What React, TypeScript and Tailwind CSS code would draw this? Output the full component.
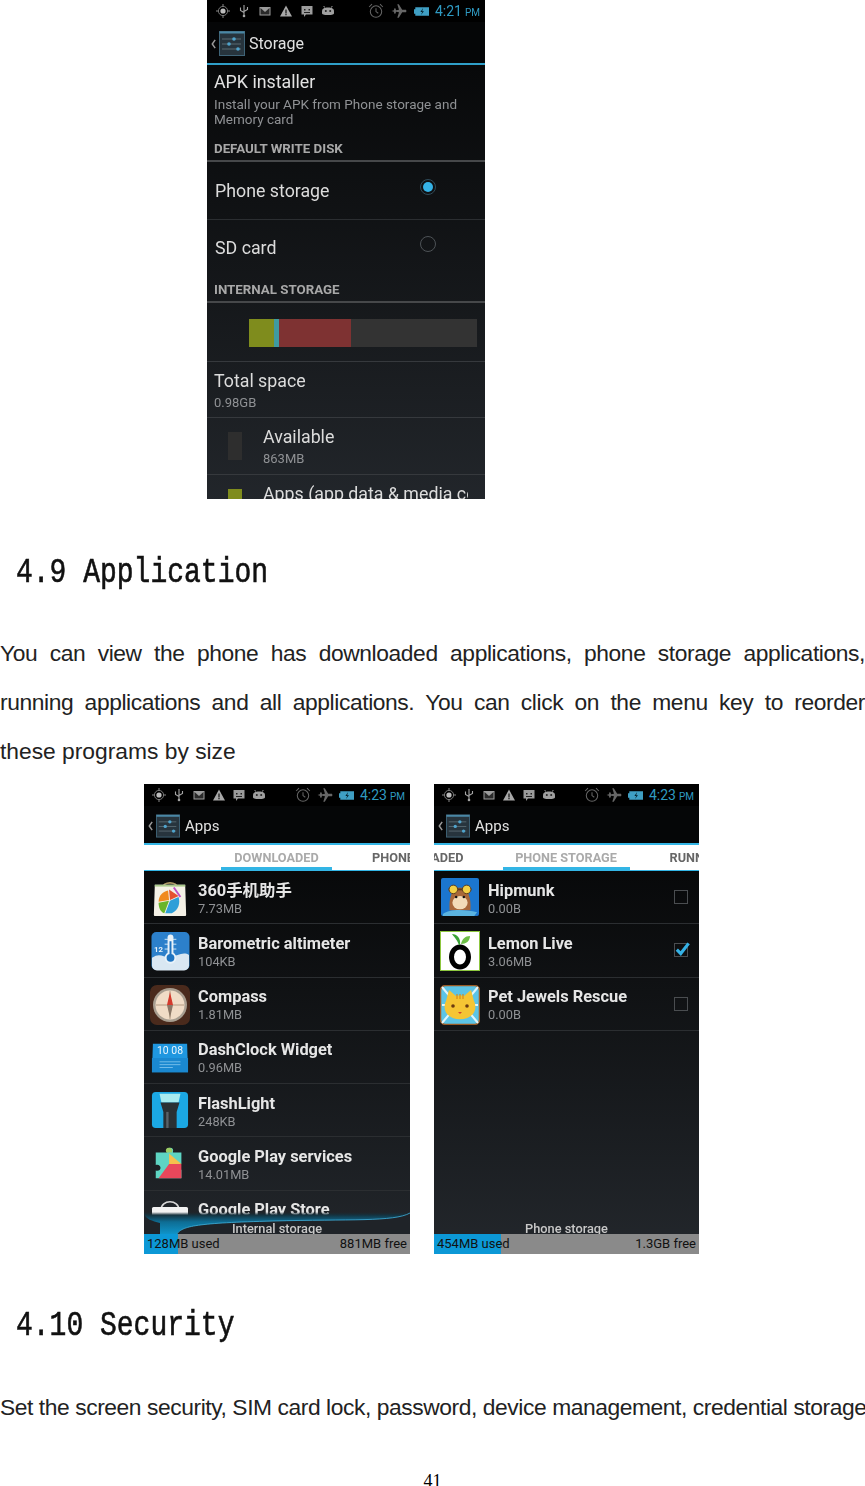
const ROBOTO = 'font-["Roboto","Noto_Sans_CJK_SC",sans-serif]';

function SunIcon() {
  return (
    <svg viewBox="0 0 14 14" className="h-[14px] w-[14px]">
      <circle cx="7" cy="7" r="2.6" fill="#bdbdbd" />
      <circle cx="7" cy="7" r="4.6" fill="none" stroke="#777" strokeWidth="1" />
      <path d="M7 0v2M7 12v2M0 7h2M12 7h2" stroke="#888" strokeWidth="1" />
    </svg>
  );
}

function UsbIcon() {
  return (
    <svg viewBox="0 0 14 14" className="h-[14px] w-[14px]">
      <path d="M7 1v12M3.5 3.5v3l3.5 2M10.5 3v2.5L7 7.5" fill="none" stroke="#a5a5a5" strokeWidth="1.1" />
      <circle cx="7" cy="12" r="1.3" fill="#a5a5a5" />
    </svg>
  );
}

function MailIcon() {
  return (
    <svg viewBox="0 0 14 14" className="h-[14px] w-[14px]">
      <rect x="1.5" y="3" width="11" height="8.5" fill="#9c9c9c" />
      <path d="M2.5 4l4.5 4 4.5-4v6.5h-9z" fill="#2a2a2a" />
    </svg>
  );
}

function WarnIcon() {
  return (
    <svg viewBox="0 0 14 14" className="h-[14px] w-[14px]">
      <path d="M7 1.5L13 12.5H1z" fill="#a8a8a8" />
      <path d="M6.4 5.5h1.2v4H6.4zM6.4 10h1.2v1.2H6.4z" fill="#111" />
    </svg>
  );
}

function ChatIcon() {
  return (
    <svg viewBox="0 0 14 14" className="h-[14px] w-[14px]">
      <path d="M1.5 2h11v8.5H6l-2 2.5v-2.5H1.5z" fill="#9c9c9c" />
      <path d="M4 5h1.5v1.5H4zM8.5 5H10v1.5H8.5zM4 8h6v.9H4z" fill="#222" />
    </svg>
  );
}

function RobotIcon() {
  return (
    <svg viewBox="0 0 14 14" className="h-[14px] w-[14px]">
      <path d="M1 7.5C1 4.5 3 3.5 7 3.5s6 1 6 4v1.5c0 1.5-1.500 2-6 2s-6-.5-6-2z" fill="#a0a0a0" />
      <path d="M3.500 3.500L2.800 2M10.500 3.500L11.200 2" stroke="#a0a0a0" strokeWidth="1" />
      <circle cx="4.800" cy="7" r="1" fill="#222" />
      <circle cx="9.200" cy="7" r="1" fill="#222" />
    </svg>
  );
}

function AlarmIcon() {
  return (
    <svg viewBox="0 0 14 14" className="h-[16px] w-[16px]">
      <circle cx="7" cy="7.500" r="5" fill="none" stroke="#666" strokeWidth="0.900" />
      <path d="M7 4.500v3l2 1.500M1 3.500L3.500 1M13 3.500L10.500 1" fill="none" stroke="#666" strokeWidth="0.900" />
    </svg>
  );
}

function PlaneIcon() {
  return (
    <svg viewBox="0 0 14 14" className="h-[16px] w-[16px]">
      <path d="M0.500 7l2-.6L3 4.500h.8l.7 1.900 2.500-.4L5.500 1h1.300l3 5 3.200-.2c.6.2.6 2.200 0 2.400L9.800 8l-3 5H5.500L7 8l-2.500-.4L3.800 9.500H3L2.500 7.600z" fill="#666" />
    </svg>
  );
}

function BatteryIcon() {
  return (
    <svg viewBox="0 0 14 14" className="h-[15px] w-[15px]">
      <path d="M0 5h1.200V3h12.800v8H1.200V9H0z" fill="#3f9fc4" />
      <path d="M8.500 3.800L6 7.500h1.700L6.500 10.200 9.300 6.700H7.600z" fill="#06222e" />
    </svg>
  );
}

function StatusBar({ time, wide }: { time: string; wide?: boolean }) {
  const cell = wide ? 'w-[21px]' : 'w-[20px]';
  const items = [SunIcon, UsbIcon, MailIcon, WarnIcon, ChatIcon, RobotIcon];
  return (
    <div className={`flex h-[22px] shrink-0 items-center bg-black ${wide ? 'pl-[5.5px] pr-[5px]' : 'pl-[5px] pr-[5px]'}`}>
      {items.map((Icon, i) => (
        <div key={i} className={`flex justify-center ${cell}`}>
          <Icon />
        </div>
      ))}
      <div className={`ml-auto flex items-center ${wide ? 'gap-[7px]' : 'gap-[6px]'}`}>
        <AlarmIcon />
        <PlaneIcon />
        <BatteryIcon />
      </div>
      <div className="ml-[6px] flex items-baseline gap-[3px] text-[14px] text-[#2f9ac2]">
        <span>{time}</span>
        <span className="text-[10px]">PM</span>
      </div>
    </div>
  );
}

function ActionBar({ title, wide }: { title: string; wide?: boolean }) {
  return (
    <div className={`flex shrink-0 items-center bg-[#050607] pt-[2px] pl-[4px] ${wide ? 'h-[41px]' : 'h-[37px]'}`}>
      <svg viewBox="0 0 6 12" className="h-[12px] w-[5px] shrink-0">
        <path d="M5 1L1.500 6 5 11" fill="none" stroke="#9a9a9a" strokeWidth="1.800" />
      </svg>
      <svg viewBox="0 0 26 25" className={`ml-[3px] shrink-0 ${wide ? 'h-[25px] w-[26px]' : 'h-[24px] w-[24px]'}`}>
        <rect x="0.500" y="0.500" width="25" height="24" fill="#27343d" stroke="#3f6478" />
        <rect x="0.500" y="0.500" width="25" height="2" fill="#4a87a5" />
        <path d="M3 8h19M3 13h19M3 18h19" stroke="#5a6a72" strokeWidth="1" />
        <circle cx="15" cy="8" r="1.800" fill="#4fa4cd" />
        <circle cx="10" cy="13" r="1.800" fill="#4fa4cd" />
        <circle cx="19" cy="18" r="1.800" fill="#4fa4cd" />
      </svg>
      <span className={`pt-[1px] text-[#e2e2e2] ${wide ? 'ml-[4px] text-[16px]' : 'ml-[5px] text-[15px]'}`}>{title}</span>
    </div>
  );
}

function SectionHead({ label, className }: { label: string; className: string }) {
  return (
    <div className={`flex shrink-0 items-end border-b-2 border-[#46484a] pb-[1px] pl-[7px] text-[13.300px] font-bold text-[#a8a8a8] ${className}`}>
      {label}
    </div>
  );
}

function RadioRow({ label, checked, className }: { label: string; checked?: boolean; className: string }) {
  return (
    <div className={`flex shrink-0 items-center pt-[2px] pr-[49px] pl-[8px] text-[17.800px] text-[#dcdcdc] ${className}`}>
      <span>{label}</span>
      <div className={`mb-[9px] ml-auto flex h-[16px] w-[16px] items-center justify-center rounded-full border ${checked ? 'border-[#2f4a58]' : 'border-[#4d5256]'}`}>
        {checked && <div className="h-[10px] w-[10px] rounded-full bg-[#35b2e6]" />}
      </div>
    </div>
  );
}

function StorageRow({
  title,
  sub,
  swatch,
  className,
}: {
  title: string;
  sub?: string;
  swatch?: string;
  className: string;
}) {
  return (
    <div className={`flex overflow-hidden border-t border-[#36393d] ${swatch ? 'pl-[21px]' : 'pl-[7px]'} ${className}`}>
      {swatch && <div className={`mt-[14px] mr-[21px] h-[28px] w-[14px] shrink-0 ${swatch}`} />}
      <div className="min-w-0 overflow-hidden pt-[8px]">
        <div className="text-[17.800px] leading-[22px] whitespace-nowrap text-[#dcdcdc]">{title}</div>
        {sub && <div className="mt-[2.500px] text-[13px] leading-[16px] text-[#8f9194]">{sub}</div>}
      </div>
    </div>
  );
}

function StorageScreen() {
  return (
    <div className={`flex h-[499px] w-[278px] flex-col overflow-hidden blur-[0.3px] ${ROBOTO}`}>
      <StatusBar time="4:21" wide />
      <ActionBar title="Storage" wide />
      <div className="h-[2px] shrink-0 bg-[#2f9fc9]" />
      <div className="flex flex-1 flex-col bg-gradient-to-b from-[#08090a] to-[#23272c]">
        <div className="shrink-0 pt-[6px] pl-[7px]">
          <div className="text-[17.800px] leading-[22px] text-[#e2e2e2]">APK installer</div>
          <div className="mt-[3.500px] text-[13.500px] leading-[15px] text-[#8f9194]">
            Install your APK from Phone storage and
            <br />
            Memory card
          </div>
        </div>
        <SectionHead label="DEFAULT WRITE DISK" className="h-[35.500px]" />
        <RadioRow label="Phone storage" checked className="h-[58px] border-b border-[#2b2e31]" />
        <RadioRow label="SD card" className="h-[55px]" />
        <SectionHead label="INTERNAL STORAGE" className="h-[28px]" />
        <div className="flex h-[58px] shrink-0 items-start pt-[16px] pr-[8px] pl-[42px]">
          <div className="flex h-[28px] w-full">
            <div className="w-[25px] bg-[#7f8c1d]" />
            <div className="w-[5px] bg-[#3f9aa0]" />
            <div className="w-[72px] bg-[#7e3232]" />
            <div className="flex-1 bg-[#333333]" />
          </div>
        </div>
        <StorageRow title="Total space" sub="0.98GB" className="h-[56px] shrink-0" />
        <StorageRow title="Available" sub="863MB" swatch="bg-[#2e2e2e]" className="h-[57px] shrink-0" />
        <StorageRow title="Apps (app data & media co" swatch="bg-[#7f8c1d]" className="min-h-0 flex-1 pr-[17px]" />
      </div>
    </div>
  );
}

function TabStrip({ left, active, right, indicator }: { left: string; active: string; right: string; indicator: string }) {
  return (
    <div className="flex h-[26px] shrink-0 border-b border-[#33b5e5] text-[12.700px] font-bold">
      <div className="flex min-w-0 flex-1 items-center justify-end overflow-hidden pr-[39px] whitespace-nowrap text-[#666]">
        <span className="shrink-0">{left}</span>
      </div>
      <div className={`flex shrink-0 items-center justify-center border-b-[3px] border-[#33b5e5] pt-[3px] text-[#aaaaaa] ${indicator}`}>
        {active}
      </div>
      <div className="flex min-w-0 flex-1 items-center overflow-hidden pl-[40px] whitespace-nowrap text-[#666]">
        <span className="shrink-0">{right}</span>
      </div>
    </div>
  );
}

function Bag360() {
  return (
    <svg viewBox="0 0 40 40" className="h-[40px] w-[38px]">
      <path d="M12 10C12 2 28 2 28 10" fill="none" stroke="#b09a66" strokeWidth="1.800" />
      <path d="M4 6h32l1 32a1 1 0 0 1-1 1H4a1 1 0 0 1-1-1z" fill="#f4f1e6" />
      <path d="M4 6h32v2H4z" fill="#a9c98a" />
      <path d="M8 24c0-7 5-11 10-12l1 10z" fill="#f08a1d" />
      <path d="M8 25l11-2-5 13c-4-1-6-6-6-11z" fill="#69b52a" />
      <path d="M20 23l9-4c2 6 0 14-7 17l-7 0z" fill="#2f9fd8" />
      <path d="M19 11l10 7-9 4z" fill="#e5512f" />
      <path d="M24 9l7 10" stroke="#c04fc4" strokeWidth="2" />
    </svg>
  );
}

function Barometer() {
  return (
    <svg viewBox="0 0 40 40" className="h-[40px] w-[39px]">
      <rect x="0.500" y="0.500" width="39" height="39" rx="5" fill="#2c80cb" />
      <path d="M1 27c8-6 12 0 19-1s13-6 19-2v11a5 5 0 0 1-5 5H6a5 5 0 0 1-5-5z" fill="#d9e7f2" />
      <path d="M14 8h12M14 13h12M14 18h12" stroke="#cfe5f6" strokeWidth="1" />
      <rect x="17" y="3" width="6" height="24" rx="3" fill="#e8f2f9" />
      <circle cx="20" cy="27" r="6" fill="#e8f2f9" />
      <circle cx="20" cy="27" r="4" fill="#1f74c0" />
      <rect x="19" y="10" width="2" height="15" fill="#1f74c0" />
      <text x="3" y="21" fontSize="8" fontWeight="700" fill="#e8f2f9">12</text>
    </svg>
  );
}

function CompassIcon() {
  return (
    <svg viewBox="0 0 40 40" className="h-[40px] w-[40px]">
      <rect width="40" height="40" rx="7" fill="#4a2a1c" />
      <circle cx="20" cy="20" r="17" fill="#a89e90" />
      <circle cx="20" cy="20" r="14.500" fill="#f0dcc6" />
      <path d="M20 6v28M6 20h28" stroke="#a58b72" strokeWidth="0.800" />
      <path d="M20 7l3 13h-6z" fill="#d33a2c" />
      <path d="M20 33l3-13h-6z" fill="#8a7766" />
    </svg>
  );
}

function DashClock() {
  return (
    <svg viewBox="0 0 40 40" className="h-[40px] w-[38px]">
      <path d="M2 5h36l1 30H1z" fill="#1f97e0" />
      <rect x="1" y="20" width="38" height="15" fill="#1a88d0" />
      <text x="20" y="16" fontSize="11" textAnchor="middle" fill="#e8f5fd">10 08</text>
      <path d="M9 24h22M9 27h22M9 30h14" stroke="#8ccbf0" strokeWidth="0.800" />
    </svg>
  );
}

function Flashlight() {
  return (
    <svg viewBox="0 0 40 40" className="h-[38px] w-[38px]">
      <rect x="1" y="1" width="38" height="38" rx="4" fill="#1ba8e4" />
      <path d="M9 3h22l-2 9H11z" fill="#a9ecf0" />
      <path d="M10 12h20l-3 10v17H13V22z" fill="#2a3034" />
      <path d="M16 22h2.500v17H16z" fill="#596268" />
    </svg>
  );
}

function PlayServices() {
  return (
    <svg viewBox="0 0 40 40" className="h-[38px] w-[38px]">
      <path d="M20 4c3 0 4 2 3 5h9v12c-3-1-5 0-5 3s2 4 5 3v9H5v-8c3 1 5-1 5-3s-2-4-5-3V9h12c-1-3 0-5 3-5z" fill="#5ed5c3" />
      <path d="M19 10l13 11-13 0z" fill="#f5c04d" />
      <path d="M19 21h13v15H8z" fill="#e8475b" />
      <path d="M19 4c3 0 4 2 3 5h-6c-1-3 0-5 3-5z" fill="#9ccc65" />
    </svg>
  );
}

function PlayStore() {
  return (
    <svg viewBox="0 0 40 40" className="h-[40px] w-[40px]">
      <path d="M11 12C11 1 29 1 29 12" fill="none" stroke="#d8d8d8" strokeWidth="1.600" />
      <rect x="2" y="9" width="36" height="30" rx="1.500" fill="#f2f2f2" />
    </svg>
  );
}

function Hipmunk() {
  return (
    <svg viewBox="0 0 40 40" className="h-[38px] w-[38px]">
      <rect width="40" height="40" rx="2" fill="#1b76cf" />
      <path d="M9 34c-1-14 3-24 11-24s12 10 11 24z" fill="#a8683a" />
      <ellipse cx="20" cy="26" rx="8" ry="7" fill="#f3dcb8" />
      <path d="M8 12h24" stroke="#5a3a1c" strokeWidth="2" />
      <circle cx="13" cy="12" r="4.500" fill="#f3d145" stroke="#5a3a1c" />
      <circle cx="27" cy="12" r="4.500" fill="#f3d145" stroke="#5a3a1c" />
      <circle cx="16" cy="20" r="1.300" fill="#111" />
      <circle cx="24" cy="20" r="1.300" fill="#111" />
      <path d="M2 38c7-6 24-5 36-2l-3 4H2z" fill="#5bb3e0" />
    </svg>
  );
}

function LemonLive() {
  return (
    <svg viewBox="0 0 40 40" className="h-[40px] w-[40px]">
      <rect x="0.500" y="0.500" width="39" height="39" fill="#fff" stroke="#8dc63f" />
      <ellipse cx="20" cy="26" rx="8.500" ry="10" fill="none" stroke="#000" strokeWidth="5" />
      <path d="M19 14C17 8 13 5 12 3c5 0 9 4 8 11z" fill="#3aa335" />
      <path d="M21 13c1-5 4-8 9-8 0 5-4 8-9 8z" fill="#6cbe45" />
    </svg>
  );
}

function PetJewels() {
  return (
    <svg viewBox="0 0 40 40" className="h-[40px] w-[40px]">
      <rect x="0.500" y="0.500" width="39" height="39" rx="5" fill="#5cc4e6" stroke="#9a5a24" strokeWidth="1.500" />
      <path d="M2 2l10 12M38 2L28 14M2 38l10-12M38 38L28 26M2 20h6M38 20h-6" stroke="#e3f5fb" strokeWidth="2" />
      <path d="M6 16L9 5l7 6c3-1 6-1 8 0l7-6 3 11c2 4 2 9-1 13-6 7-20 7-26 0-3-4-3-9-1-13z" fill="#f5c534" />
      <circle cx="13" cy="21" r="1.800" fill="#6b3a10" />
      <circle cx="27" cy="21" r="1.800" fill="#6b3a10" />
      <path d="M18 27h4l-2 2z" fill="#d2452c" />
      <path d="M17 9v5M20 9v5M23 9v5" stroke="#d58b1c" strokeWidth="1.200" />
    </svg>
  );
}

type AppItem = {
  name: string;
  size: string;
  icon: () => React.JSX.Element;
  check?: 'on' | 'off';
};

const DOWNLOADED: AppItem[] = [
  { name: '360手机助手', size: '7.73MB', icon: Bag360 },
  { name: 'Barometric altimeter', size: '104KB', icon: Barometer },
  { name: 'Compass', size: '1.81MB', icon: CompassIcon },
  { name: 'DashClock Widget', size: '0.96MB', icon: DashClock },
  { name: 'FlashLight', size: '248KB', icon: Flashlight },
  { name: 'Google Play services', size: '14.01MB', icon: PlayServices },
  { name: 'Google Play Store', size: '', icon: PlayStore },
];

const PHONE_APPS: AppItem[] = [
  { name: 'Hipmunk', size: '0.00B', icon: Hipmunk, check: 'off' },
  { name: 'Lemon Live', size: '3.06MB', icon: LemonLive, check: 'on' },
  { name: 'Pet Jewels Rescue', size: '0.00B', icon: PetJewels, check: 'off' },
];

function AppRow({ app }: { app: AppItem }) {
  const Icon = app.icon;
  return (
    <div className="flex h-[53.300px] shrink-0 items-start border-b border-[#2b2e31] pt-[7px] pr-[11px] pl-[5px]">
      <div className="flex w-[42px] shrink-0 justify-center">
        <Icon />
      </div>
      <div className="ml-[7px] min-w-0 flex-1">
        <div className="mt-[2.500px] text-[16.400px] leading-[20px] font-bold text-[#e6e6e6]">{app.name}</div>
        <div className="text-[12.800px] leading-[16px] text-[#8f9194]">{app.size}</div>
      </div>
      {app.check && (
        <div className="relative mt-[12px] h-[14px] w-[14px] border border-[#4a4d50]">
          {app.check === 'on' && (
            <svg viewBox="0 0 16 16" className="absolute -top-[4px] -left-[1px] h-[18px] w-[18px]">
              <path d="M2.500 8.500l3.500 3.500 7-9" fill="none" stroke="#35b2e6" strokeWidth="2.800" />
            </svg>
          )}
        </div>
      )}
    </div>
  );
}

function Swoosh() {
  return (
    <svg viewBox="0 0 266 22" preserveAspectRatio="none" className="absolute right-0 bottom-[20px] left-0 h-[22px] w-full">
      <defs>
        <linearGradient id="swoosh-top" x1="0" y1="0" x2="0" y2="1">
          <stop offset="0" stopColor="#1a2a33" stopOpacity="0" />
          <stop offset="0.140" stopColor="#14323f" />
          <stop offset="0.450" stopColor="#0e6d94" />
          <stop offset="1" stopColor="#0f93c8" />
        </linearGradient>
      </defs>
      <rect y="3" width="266" height="19" fill="#1f2328" />
      <path d="M0 2C2 7 8 9 16 11V22H33C38 14 53 11 129 9S250 10 266 1V0H0z" fill="url(#swoosh-top)" />
      <path d="M33 22C38 14 53 11 129 9S250 10 266 1" fill="none" stroke="#3fb3de" strokeWidth="0.800" />
    </svg>
  );
}

function AppsScreen({
  time,
  tabs,
  apps,
  width,
  label,
  used,
  free,
  usedWidth,
  swoosh,
}: {
  time: string;
  tabs: { left: string; active: string; right: string; indicator: string };
  apps: AppItem[];
  width: string;
  label: string;
  used: string;
  free: string;
  usedWidth: string;
  swoosh?: boolean;
}) {
  return (
    <div className={`flex h-[470px] flex-col overflow-hidden blur-[0.3px] ${width} ${ROBOTO}`}>
      <StatusBar time={time} />
      <ActionBar title="Apps" />
      <div className="h-[2px] shrink-0 bg-[#33b5e5]" />
      <TabStrip {...tabs} />
      <div className="relative flex min-h-0 flex-1 flex-col overflow-hidden bg-gradient-to-b from-[#08090a] to-[#23272c]">
        {apps.map((app) => (
          <AppRow key={app.name} app={app} />
        ))}
        {swoosh && <Swoosh />}
        <div className="absolute right-0 bottom-[18px] left-0 text-center text-[12.800px] leading-[15px] font-medium text-[#c8c8c8]">
          {label}
        </div>
        <div className="absolute right-0 bottom-0 left-0 h-[20px] bg-[#8a8a8a]">
          <div className={`h-full bg-[#0c98d6] ${usedWidth}`} />
        </div>
        <div className="absolute right-0 bottom-0 left-0 flex h-[20px] items-center justify-between px-[3px] text-[13px] text-[#111]">
          <span>{used}</span>
          <span>{free}</span>
        </div>
      </div>
    </div>
  );
}

export default function App() {
  return (
    <div className="min-h-[1486px] w-[865px] bg-white font-['Liberation_Sans',sans-serif] text-[#222]">
      <div className="pl-[207px]">
        <StorageScreen />
      </div>

      <h2 className="mt-[52px] origin-center scale-y-[1.25] pl-[16px] font-['Liberation_Mono',monospace] text-[28px] leading-[44px] font-normal text-[#111] [-webkit-text-stroke:0.5px_#111]">
        4.9 Application
      </h2>

      <div className="mt-[34px] text-[22.800px] leading-[49px]">
        <p className="text-justify tracking-[-0.4px] [text-align-last:justify]">
          You can view the phone has downloaded applications, phone storage applications, running applications and all
          applications. You can click on the menu key to reorder
        </p>
        <p>these programs by size</p>
      </div>

      <div className="mt-[8px] flex gap-[24px] pl-[144px]">
        <AppsScreen
          time="4:23"
          tabs={{ left: '', active: 'DOWNLOADED', right: 'PHONE STORAGE', indicator: 'w-[111px]' }}
          apps={DOWNLOADED}
          width="w-[266px]"
          label="Internal storage"
          used="128MB used"
          free="881MB free"
          usedWidth="w-[34px]"
          swoosh
        />
        <AppsScreen
          time="4:23"
          tabs={{ left: 'DOWNLOADED', active: 'PHONE STORAGE', right: 'RUNNING', indicator: 'w-[127px]' }}
          apps={PHONE_APPS}
          width="w-[265px]"
          label="Phone storage"
          used="454MB used"
          free="1.3GB free"
          usedWidth="w-[67px]"
        />
      </div>

      <h2 className="mt-[50px] origin-center scale-y-[1.25] pl-[16px] font-['Liberation_Mono',monospace] text-[28px] leading-[44px] font-normal text-[#111] [-webkit-text-stroke:0.5px_#111]">
        4.10 Security
      </h2>

      <p className="mt-[35px] text-[22.800px] leading-[49px] tracking-[-0.42px] whitespace-nowrap">
        Set the screen security, SIM card lock, password, device management, credential storage
      </p>

      <div className="mt-[37px] text-center font-['Liberation_Serif',serif] text-[18px] leading-[24px] text-black">41</div>
    </div>
  );
}
